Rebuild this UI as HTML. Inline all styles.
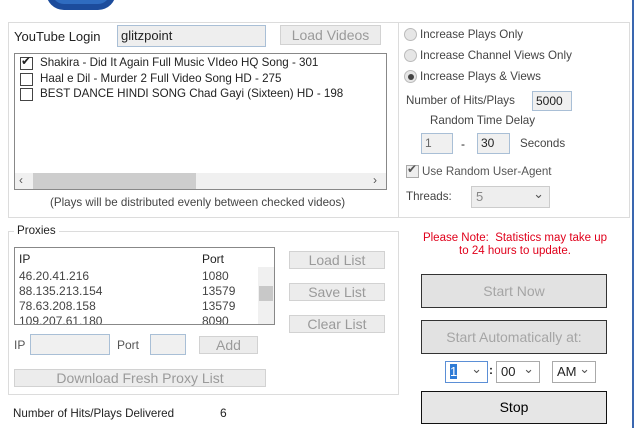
<!DOCTYPE html>
<html><head><style>
*{box-sizing:border-box;margin:0;padding:0}
body{width:634px;height:428px;background:#fff;font-family:"Liberation Sans",sans-serif;font-size:12px;color:#222;position:relative;overflow:hidden}
.a{position:absolute;white-space:nowrap}
.grp{position:absolute;border:1px solid #dcdcdc}
.btn{position:absolute;background:#ececec;border:1px solid #d2d2d2;color:#9a9a9a;text-align:center;font-size:14px}
.in{position:absolute;background:#f0f0f0;border:1px solid #a9bfd6;font-size:12px;padding-left:3px}
.cb{position:absolute;width:13px;height:13px;border:1px solid #444;background:#fff}
.rad{position:absolute;width:13px;height:13px;border-radius:50%;border:1px solid #bbb;background:#e6e6e6}
.big{position:absolute;background:#e2e2e2;border:1px solid #333;color:#a5a5a5;text-align:center;font-size:14px}
.sel{position:absolute;border:1px solid #aaa;background:#fff;font-size:13px;padding-left:4px}
.sel:after{content:"⌄";position:absolute;right:5px;top:-3px;font-size:13px;color:#555}
.t{font-size:11.6px}
</style></head><body>
<div class="a" style="left:46px;top:-8px;width:70px;height:18px;background:#1c4c9c;border-radius:0 0 30px 30px"></div>
<div class="a" style="left:52px;top:-8px;width:58px;height:12px;background:#2f6cc0;border-radius:0 0 26px 26px"></div>
<div class="a" style="left:632px;top:0;width:2px;height:428px;background:#3a67b0"></div>

<div class="grp" style="left:8px;top:22px;width:391px;height:196px"></div>
<div class="a" style="left:14px;top:29px;font-size:13px">YouTube Login</div>
<div class="in" style="left:117px;top:25px;width:149px;height:22px;background:#eee;line-height:20px;font-size:13px">glitzpoint</div>
<div class="btn" style="left:280px;top:25px;width:101px;height:20px;line-height:18px">Load Videos</div>
<div class="a" style="left:14px;top:53px;width:373px;height:137px;border:1px solid #888"></div>
<div class="cb" style="left:20px;top:57px"></div><div class="a" style="left:21px;top:54px;font-size:12px">✔</div>
<div class="cb" style="left:20px;top:73px"></div>
<div class="cb" style="left:20px;top:88px"></div>
<div class="a t" style="left:40px;top:56px">Shakira - Did It Again Full Music VIdeo HQ Song - 301</div>
<div class="a t" style="left:40px;top:72px">Haal e Dil - Murder 2 Full Video Song HD - 275</div>
<div class="a t" style="left:40px;top:87px">BEST DANCE HINDI SONG Chad Gayi (Sixteen) HD - 198</div>
<div class="a" style="left:15px;top:173px;width:371px;height:16px;background:#f0f0f0"></div>
<div class="a" style="left:33px;top:173px;width:163px;height:16px;background:#cdcdcd"></div>
<div class="a" style="left:19px;top:173px;font-size:12px;color:#555">‹</div>
<div class="a" style="left:373px;top:173px;font-size:12px;color:#555">›</div>
<div class="a t" style="left:50px;top:196px;color:#444">(Plays will be distributed evenly between checked videos)</div>

<div class="grp" style="left:398px;top:22px;width:232px;height:196px;border-left:none"></div>
<div class="rad" style="left:404px;top:28px"></div><div class="a t" style="left:420px;top:28px;color:#444">Increase Plays Only</div>
<div class="rad" style="left:404px;top:49px"></div><div class="a t" style="left:420px;top:49px;color:#444">Increase Channel Views Only</div>
<div class="rad" style="left:404px;top:70px"></div><div class="a" style="left:408px;top:74px;width:6px;height:6px;border-radius:50%;background:#444"></div><div class="a t" style="left:420px;top:70px;color:#444">Increase Plays &amp; Views</div>
<div class="a t" style="left:406px;top:94px;color:#444">Number of Hits/Plays</div>
<div class="in" style="left:532px;top:91px;width:40px;height:20px;line-height:18px">5000</div>
<div class="a t" style="left:430px;top:114px;color:#444">Random Time Delay</div>
<div class="in" style="left:421px;top:133px;width:32px;height:21px;line-height:19px;color:#666">1</div>
<div class="a" style="left:461px;top:137px">-</div>
<div class="in" style="left:477px;top:133px;width:33px;height:21px;line-height:19px">30</div>
<div class="a t" style="left:520px;top:137px;color:#444">Seconds</div>
<div class="cb" style="left:406px;top:165px;border-color:#aaa;background:#eee"></div><div class="a" style="left:407px;top:162px;color:#555">✔</div>
<div class="a t" style="left:422px;top:165px;color:#555">Use Random User-Agent</div>
<div class="a t" style="left:406px;top:190px;color:#444">Threads:</div>
<div class="sel" style="left:471px;top:186px;width:79px;height:22px;background:#eee;border-color:#ccc;color:#888;line-height:20px">5</div>

<div class="grp" style="left:8px;top:231px;width:391px;height:164px"></div>
<div class="a t" style="left:14px;top:224px;background:#fff;padding:0 3px">Proxies</div>
<div class="a" style="left:14px;top:247px;width:261px;height:78px;border:1px solid #888;overflow:hidden;background:#fff">
<div class="a" style="left:4px;top:4px">IP</div><div class="a" style="left:187px;top:4px">Port</div>
<div class="a" style="left:4px;top:21px;color:#444">46.20.41.216</div><div class="a" style="left:187px;top:21px;color:#444">1080</div>
<div class="a" style="left:4px;top:36px;color:#444">88.135.213.154</div><div class="a" style="left:187px;top:36px;color:#444">13579</div>
<div class="a" style="left:4px;top:51px;color:#444">78.63.208.158</div><div class="a" style="left:187px;top:51px;color:#444">13579</div>
<div class="a" style="left:4px;top:66px;color:#444">109.207.61.180</div><div class="a" style="left:187px;top:66px;color:#444">8090</div>
<div class="a" style="left:243px;top:19px;width:16px;height:57px;background:#f0f0f0"></div>
<div class="a" style="left:244px;top:38px;width:14px;height:15px;background:#c8c8c8"></div>
</div>
<div class="btn" style="left:289px;top:251px;width:96px;height:18px;line-height:16px">Load List</div>
<div class="btn" style="left:289px;top:283px;width:96px;height:18px;line-height:16px">Save List</div>
<div class="btn" style="left:289px;top:315px;width:96px;height:18px;line-height:16px">Clear List</div>
<div class="a" style="left:14px;top:338px;color:#555">IP</div>
<div class="in" style="left:30px;top:334px;width:80px;height:21px"></div>
<div class="a" style="left:117px;top:338px;color:#555">Port</div>
<div class="in" style="left:150px;top:334px;width:36px;height:21px"></div>
<div class="btn" style="left:199px;top:336px;width:59px;height:18px;line-height:16px">Add</div>
<div class="btn" style="left:14px;top:369px;width:252px;height:18px;line-height:16px">Download Fresh Proxy List</div>
<div class="a t" style="left:13px;top:407px">Number of Hits/Plays Delivered</div>
<div class="a" style="left:220px;top:406px">6</div>

<div class="a" style="left:400px;top:232px;width:230px;text-align:center;color:#e0001b;line-height:13px;font-size:11.5px">Please Note:&nbsp; Statistics may take up<br>to 24 hours to update.</div>
<div class="big" style="left:421px;top:274px;width:186px;height:34px;line-height:32px">Start Now</div>
<div class="big" style="left:421px;top:320px;width:186px;height:34px;line-height:32px">Start Automatically at:</div>
<div class="sel" style="left:445px;top:361px;width:43px;height:22px;line-height:20px;border-color:#5b8fd6"><span style="background:#2e7bd6;color:#fff">1</span></div>
<div class="a" style="left:489px;top:363px;font-weight:bold">:</div>
<div class="sel" style="left:496px;top:361px;width:44px;height:22px;line-height:20px">00</div>
<div class="sel" style="left:552px;top:361px;width:44px;height:22px;line-height:20px">AM</div>
<div class="big" style="left:421px;top:391px;width:186px;height:33px;line-height:31px;color:#000;background:#e6e6e6;border-color:#111">Stop</div>
</body></html>
